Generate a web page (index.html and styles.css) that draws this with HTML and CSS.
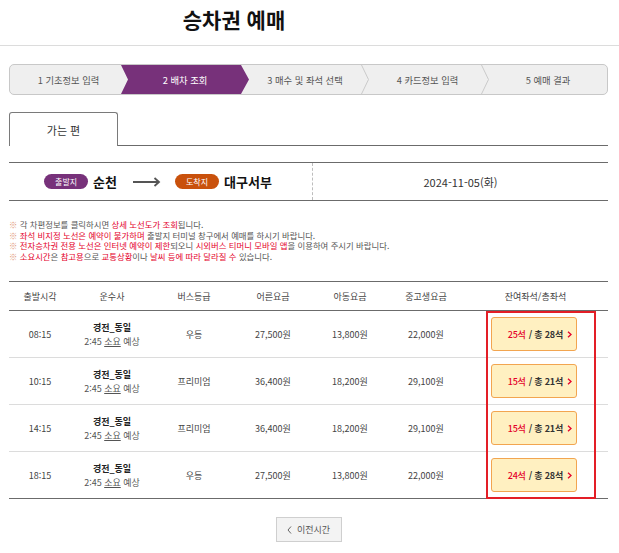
FILE: index.html
```html
<!DOCTYPE html>
<html lang="ko">
<head>
<meta charset="utf-8">
<title>승차권 예매</title>
<link rel="stylesheet" href="styles.css">
</head>
<body>
<header class="page-head"><h1 class="title">승차권 예매</h1></header>
<main class="wrap">
  <div class="steps">
    <div class="step s1">1 기초정보 입력</div>
    <div class="step s2">2 배차 조회</div>
    <div class="step s3">3 매수 및 좌석 선택</div>
    <span class="sep"><svg width="8" height="29" viewBox="0 0 8 29"><polyline points="0.5,0 7.5,14.5 0.5,29" fill="none" stroke="#cacaca" stroke-width="1"/></svg></span>
    <div class="step s4">4 카드정보 입력</div>
    <span class="sep"><svg width="8" height="29" viewBox="0 0 8 29"><polyline points="0.5,0 7.5,14.5 0.5,29" fill="none" stroke="#cacaca" stroke-width="1"/></svg></span>
    <div class="step s5">5 예매 결과</div>
  </div>

  <div class="tabs"><div class="tab">가는 편</div></div>

  <div class="route">
    <div class="route-l">
      <span class="badge dep">출발지</span><span class="place">순천</span>
      <svg class="arrow" width="28" height="10" viewBox="0 0 28 10"><path d="M0 5 H26 M21.5 1 L26 5 L21.5 9" fill="none" stroke="#555" stroke-width="1.8"/></svg>
      <span class="badge arr">도착지</span><span class="place">대구서부</span>
    </div>
    <div class="route-r">2024-11-05(화)</div>
  </div>

  <ul class="notes">
    <li><span class="mk">※</span> 각 차편정보를 클릭하시면 <em>상세 노선도가 조회</em>됩니다.</li>
    <li><span class="mk">※</span> <em>좌석 비지정 노선은 예약이 불가하며</em> 출발지 터미널 창구에서 예매를 하시기 바랍니다.</li>
    <li><span class="mk">※</span> <em>전자승차권 전용 노선은 인터넷 예약이 제한</em>되오니 <em>시외버스 티머니 모바일 앱</em>을 이용하여 주시기 바랍니다.</li>
    <li><span class="mk">※</span> <em>소요시간</em>은 <em>참고용</em>으로 <em>교통상황</em>이나 <em>날씨 등에 따라 달라질 수</em> 있습니다.</li>
  </ul>

  <div class="table-wrap">
    <table class="bus">
      <colgroup>
        <col class="c1"><col class="c2"><col class="c3"><col class="c4"><col class="c5"><col class="c6"><col class="c7">
      </colgroup>
      <thead>
        <tr><th>출발시각</th><th>운수사</th><th>버스등급</th><th>어른요금</th><th>아동요금</th><th>중고생요금</th><th>잔여좌석/총좌석</th></tr>
      </thead>
      <tbody>
        <tr>
          <td>08:15</td>
          <td><div class="co">경전_동일</div><div class="dur">2:45 <u>소요</u> 예상</div></td>
          <td>우등</td><td>27,500원</td><td>13,800원</td><td>22,000원</td>
          <td><span class="seat"><b class="rem">25석</b> / 총 28석 <svg class="chev" width="5" height="7" viewBox="0 0 5 7"><path d="M1 0.8 L4 3.5 L1 6.2" fill="none" stroke="#e4002b" stroke-width="1.3"/></svg></span></td>
        </tr>
        <tr>
          <td>10:15</td>
          <td><div class="co">경전_동일</div><div class="dur">2:45 <u>소요</u> 예상</div></td>
          <td>프리미엄</td><td>36,400원</td><td>18,200원</td><td>29,100원</td>
          <td><span class="seat"><b class="rem">15석</b> / 총 21석 <svg class="chev" width="5" height="7" viewBox="0 0 5 7"><path d="M1 0.8 L4 3.5 L1 6.2" fill="none" stroke="#e4002b" stroke-width="1.3"/></svg></span></td>
        </tr>
        <tr>
          <td>14:15</td>
          <td><div class="co">경전_동일</div><div class="dur">2:45 <u>소요</u> 예상</div></td>
          <td>프리미엄</td><td>36,400원</td><td>18,200원</td><td>29,100원</td>
          <td><span class="seat"><b class="rem">15석</b> / 총 21석 <svg class="chev" width="5" height="7" viewBox="0 0 5 7"><path d="M1 0.8 L4 3.5 L1 6.2" fill="none" stroke="#e4002b" stroke-width="1.3"/></svg></span></td>
        </tr>
        <tr>
          <td>18:15</td>
          <td><div class="co">경전_동일</div><div class="dur">2:45 <u>소요</u> 예상</div></td>
          <td>우등</td><td>27,500원</td><td>13,800원</td><td>22,000원</td>
          <td><span class="seat"><b class="rem">24석</b> / 총 28석 <svg class="chev" width="5" height="7" viewBox="0 0 5 7"><path d="M1 0.8 L4 3.5 L1 6.2" fill="none" stroke="#e4002b" stroke-width="1.3"/></svg></span></td>
        </tr>
      </tbody>
    </table>
    <div class="highlight"></div>
  </div>

  <div class="more">
    <button class="prev" type="button"><svg width="5" height="8" viewBox="0 0 5 8"><path d="M4 0.5 L1 4 L4 7.5" fill="none" stroke="#666" stroke-width="1"/></svg> 이전시간</button>
  </div>
</main>
</body>
</html>
```

FILE: styles.css
```css
* { box-sizing: border-box; }

body {
  margin: 0;
  background: #fff;
  color: #444;
  font-family: "Noto Sans CJK KR", "Noto Sans", sans-serif;
}

.page-head {
  height: 46px;
  border-bottom: 1px solid #dcdcdc;
}

.title {
  margin: 0;
  width: 468px;
  padding-top: 6px;
  text-align: center;
  font-size: 21px;
  line-height: 26px;
  font-weight: 700;
  color: #111;
}

.wrap {
  width: 599px;
  margin-left: 9px;
}

/* steps */
.steps {
  margin-top: 18px;
  height: 31px;
  display: flex;
  border: 1px solid #c8c8c8;
  border-radius: 5px;
  background: #efefef;
  overflow: hidden;
}

.step {
  height: 29px;
  display: flex;
  align-items: center;
  justify-content: center;
  font-size: 9.3px;
  color: #555;
  white-space: nowrap;
}

.s1 { flex: 0 0 111px; padding-left: 6px; }
.s2 {
  flex: 0 0 128px;
  background: #77317a;
  color: #fff;
  clip-path: polygon(0 0, calc(100% - 8px) 0, 100% 50%, calc(100% - 8px) 100%, 0 100%, 7px 50%);
}
.s3 { flex: 0 0 112px; }
.s4 { flex: 0 0 112px; padding-left: 5px; }
.s5 { flex: 1 1 auto; }

.sep {
  flex: 0 0 8px;
  display: flex;
}

/* tab */
.tabs {
  margin-top: 17px;
  border-bottom: 1px solid #6b6b6b;
  display: flex;
}

.tab {
  width: 109px;
  height: 34px;
  margin-bottom: -1px;
  border: 1px solid #7a7a7a;
  border-bottom: none;
  border-radius: 3px 3px 0 0;
  background: #fff;
  display: flex;
  align-items: center;
  justify-content: center;
  font-size: 11px;
  color: #333;
}

/* route */
.route {
  margin-top: 16px;
  height: 39px;
  border-top: 1px solid #6b6b6b;
  border-bottom: 1px solid #6b6b6b;
  display: flex;
}

.route-l {
  flex: 0 0 304px;
  border-right: 1px dashed #bdbdbd;
  display: flex;
  align-items: center;
  justify-content: center;
  padding-right: 5px;
}

.route-r {
  flex: 1 1 auto;
  display: flex;
  align-items: center;
  justify-content: center;
  font-size: 11px;
  color: #333;
}

.badge {
  display: inline-flex;
  align-items: center;
  justify-content: center;
  width: 44px;
  height: 15px;
  border-radius: 8px;
  color: #fff;
  font-size: 8px;
}
.dep { background: #77317a; }
.arr { background: #c9510c; }

.place {
  margin-left: 5px;
  font-size: 13px;
  font-weight: 700;
  color: #111;
}

.arrow { margin: 0 14px 0 16px; }

/* notes */
.notes {
  list-style: none;
  margin: 18px 0 0;
  padding: 0;
  font-size: 8.4px;
  line-height: 10.5px;
  color: #555;
  white-space: nowrap;
}
.notes em { font-style: normal; color: #e4002b; }
.notes .mk { color: #e39a7e; }

/* table */
.table-wrap {
  position: relative;
  margin-top: 20px;
}

.bus {
  width: 599px;
  table-layout: fixed;
  border-collapse: collapse;
  font-size: 9px;
  color: #444;
  text-align: center;
}

.c1 { width: 62px; }
.c2 { width: 82px; }
.c3 { width: 82px; }
.c4 { width: 76px; }
.c5 { width: 78px; }
.c6 { width: 74px; }
.c7 { width: 145px; }

.bus th {
  height: 29px;
  font-weight: 400;
  border-top: 1px solid #6b6b6b;
  border-bottom: 1px solid #6b6b6b;
  padding: 0;
}

.bus td {
  height: 47px;
  padding: 0;
  border-bottom: 1px solid #dcdcdc;
}

.bus tbody tr:last-child td { border-bottom: 1px solid #6b6b6b; }

.co { font-weight: 700; color: #222; line-height: 14px; margin-top: 2px; }
.dur { line-height: 14px; color: #555; }
.dur u { text-decoration: underline; }

.seat {
  display: inline-flex;
  align-items: center;
  justify-content: flex-end;
  gap: 3px;
  width: 86px;
  height: 34px;
  margin-left: -3px;
  padding-right: 4px;
  background: #fff0c1;
  border: 1px solid #f2a550;
  border-radius: 3px;
  font-weight: 700;
  color: #333;
  white-space: nowrap;
  letter-spacing: -0.2px;
}
.seat .rem { color: #e4002b; font-weight: 500; }
.chev { margin-left: 1px; }

.highlight {
  position: absolute;
  left: 477px;
  top: 30px;
  width: 110px;
  height: 188px;
  border: 2px solid #e31e26;
  pointer-events: none;
}

/* more */
.more {
  display: flex;
  justify-content: center;
  margin-top: 18px;
}

.prev {
  width: 66px;
  height: 25px;
  display: inline-flex;
  align-items: center;
  justify-content: center;
  gap: 5px;
  background: #f3f3f3;
  border: 1px solid #cfcfcf;
  border-radius: 0;
  font-family: inherit;
  font-size: 9px;
  color: #555;
  padding: 0;
}
```
